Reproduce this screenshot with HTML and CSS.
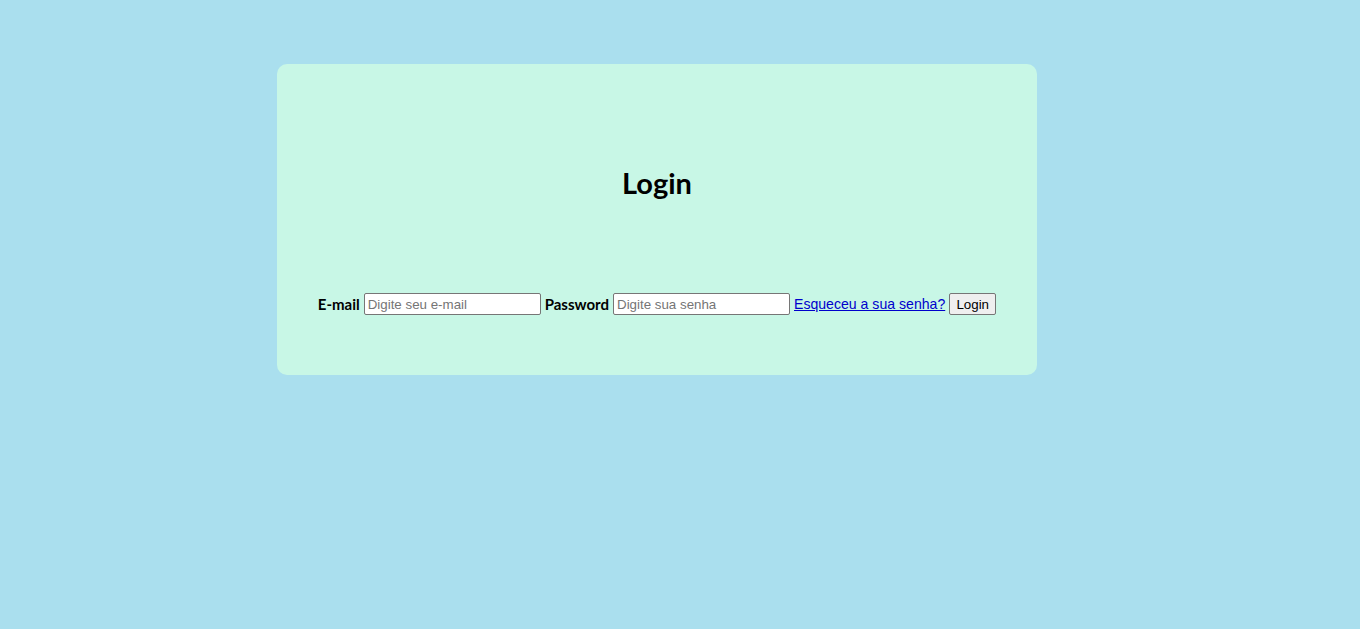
FILE: index.html
```html
<!DOCTYPE html>
<html lang="pt">
<head>
<meta charset="utf-8">
<title>Login</title>
<link rel="stylesheet" href="styles.css">
</head>
<body>
<main class="card">
  <h1 class="title">Login</h1>
  <form class="login-form">
    <label class="label" for="email">E-mail</label>
    <input class="field" id="email" type="email" placeholder="Digite seu e-mail">
    <label class="label" for="senha">Password</label>
    <input class="field" id="senha" type="password" placeholder="Digite sua senha">
    <a class="forgot" href="#">Esqueceu a sua senha?</a>
    <button class="btn" type="button">Login</button>
  </form>
</main>
</body>
</html>
```
FILE: styles.css
```css
html, body {
  margin: 0;
  padding: 0;
  height: 100%;
}
body {
  background: #aadfee;
  font-family: "Liberation Sans", Arial, sans-serif;
}
.card {
  box-sizing: border-box;
  width: 760px;
  height: 311px;
  margin: 64px 0 0 277px;
  background: #c8f7e6;
  border-radius: 10px;
  display: flex;
  flex-direction: column;
  align-items: center;
  padding-top: 99px;
}
.title {
  margin: 0;
  font-family: Lato, "Open Sans", sans-serif;
  font-weight: 700;
  font-size: 29px;
  line-height: 40px;
  color: #000;
}
.login-form {
  margin-top: 90px;
  display: flex;
  align-items: center;
  gap: 4px;
}
.label {
  font-family: Lato, "Open Sans", sans-serif;
  font-weight: 700;
  font-size: 15px;
  color: #000;
}
.field {
  box-sizing: border-box;
  width: 177px;
  height: 22px;
  margin: 0;
  padding: 1px 3px;
  border: 1px solid #767676;
  border-radius: 2px;
  background: #fff;
  font-family: "Liberation Sans", Arial, sans-serif;
  font-size: 13.33px;
}
.field::placeholder {
  color: #757575;
}
.forgot {
  font-size: 14.1px;
  color: #0000cc;
  text-decoration: underline;
}
.btn {
  box-sizing: border-box;
  width: 47px;
  height: 22px;
  margin: 0;
  padding: 0;
  font-family: "Liberation Sans", Arial, sans-serif;
  font-size: 13.33px;
  color: #000;
  background: #efefef;
  border: 1px solid #767676;
  border-radius: 2px;
}
```
